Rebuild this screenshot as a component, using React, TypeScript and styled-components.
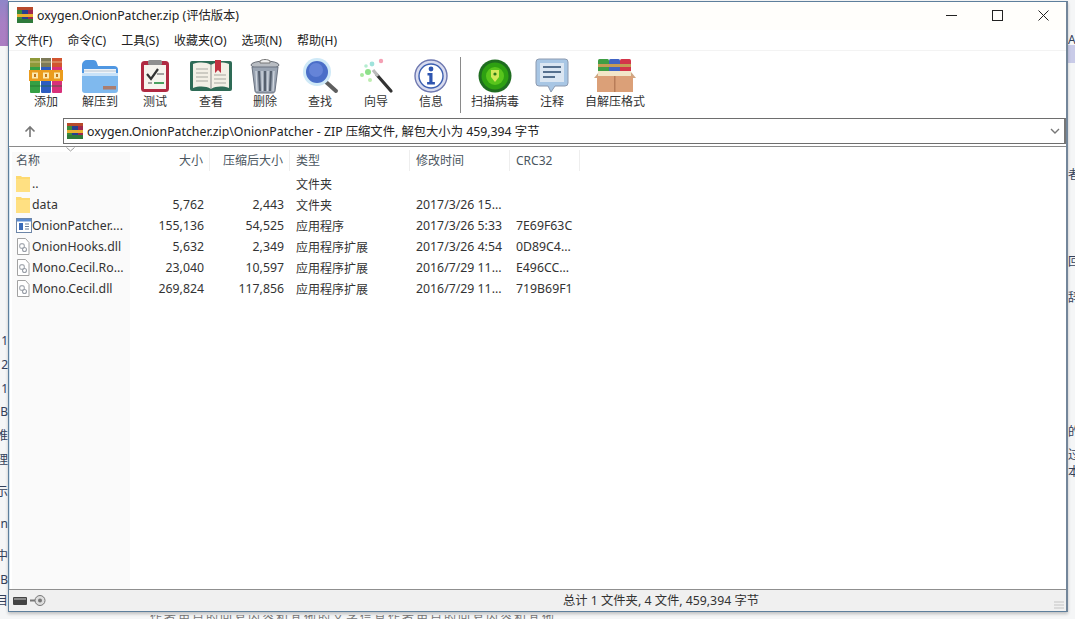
import React from 'react';
import styled, { createGlobalStyle } from 'styled-components';

const Global = createGlobalStyle`
  html, body { margin: 0; padding: 0; width: 1075px; height: 619px; overflow: hidden; background: #f4f5f6; }
  body { font-family: "Noto Sans", "Noto Sans CJK SC", sans-serif; }
`;
const FONT = `"Noto Sans", "Noto Sans CJK SC", sans-serif`;

const Desktop = styled.div`
  position: relative; width: 1075px; height: 619px; overflow: hidden;
  display: flex; flex-direction: column; padding: 1px 7px 7px 8px; box-sizing: border-box;
  background: #f5f6f7;
`;
const PurpleCorner = styled.div`
  position: absolute; left: 0; top: 0; width: 8px; height: 46px;
  background: linear-gradient(180deg, #8f86c8 0%, #a87fc4 50%, #ab7dc2 100%);
`;
const LavenderPatch = styled.div`
  position: absolute; right: 0; top: 45px; width: 7px; height: 18px; background: #c9cbe8;
`;
const Frag = styled.span<{ $left?: number; $right?: number; $top: number }>`
  position: absolute; top: ${p => p.$top}px;
  ${p => (p.$left !== undefined ? `left:${p.$left}px;` : `right:${p.$right}px;`)}
  font: 12px ${FONT}; color: #33405a; line-height: 14px; white-space: nowrap;
`;
const BottomFrag = styled.div`
  position: absolute; left: 150px; bottom: 0; width: 410px; height: 4px; overflow: hidden;
  font: 12px ${FONT}; color: #777; line-height: 5px; letter-spacing: 2px; white-space: nowrap;
`;
const Win = styled.div`
  position: relative; flex: 1; display: flex; flex-direction: column; background: #fff;
  border: 1px solid #5e7f9c; border-right: 2px solid #73869a;
  box-shadow: inset 1px 0 #d4e6f4, 0 2px 3px rgba(0,0,0,.22);
  font: 12px ${FONT}; color: #222; min-height: 0;
`;
const TitleBar = styled.div`
  height: 28px; box-sizing: border-box; padding: 0 0 2px 8px; display: flex; align-items: center;
  background: #fffefb; font-size: 12.3px; color: #222;
`;
const TitleText = styled.span` flex: 1; margin-left: 4px; `;
const WinBtn = styled.button`
  width: 46px; height: 26px; border: 0; background: none; padding: 0;
  display: flex; align-items: center; justify-content: center;
`;
const MenuBar = styled.div`
  height: 20px; display: flex; align-items: center; padding-left: 6px; gap: 15px; background: #fff; font-size: 12px; color: #222;
`;
const Toolbar = styled.div`
  height: 66px; display: flex; align-items: flex-start; padding: 6px 0 0 11px; background: #fff;
  border-top: 1px solid #f3f3f3; box-sizing: border-box;
`;
const Tool = styled.div<{ $w: number }>`
  width: ${p => p.$w}px; display: flex; flex-direction: column; align-items: center;
  font-size: 12px; line-height: 16px; color: #333; white-space: nowrap;
`;
const ToolIcon = styled.div`
  height: 37px; display: flex; align-items: center; justify-content: center;
`;
const ToolSep = styled.div` width: 1px; height: 56px; background: #8a8a8a; margin: 0 3px 0 0; `;
const AddressRow = styled.div`
  height: 30px; display: flex; align-items: center; background: #fff; box-sizing: border-box;
`;
const UpBtn = styled.div` width: 42px; margin-right: 12px; display: flex; justify-content: center; `;
const AddressBox = styled.div`
  flex: 1; height: 26px; box-sizing: border-box; border: 1px solid #6e6e6e; border-right: 2px solid #777;
  display: flex; align-items: center; padding-left: 3px; gap: 4px; font-size: 12.3px; color: #222;
`;
const AddressText = styled.span` flex: 1; white-space: nowrap; margin-top: -1px; `;
const Drop = styled.div` width: 18px; display: flex; justify-content: center; `;
const ListFrame = styled.div`
  flex: 1; position: relative; display: flex; flex-direction: column; min-height: 0;
  border-top: 1px solid #8a8a8a; box-shadow: inset 0 1px #fff; padding-top: 3px;
`;
const SortShade = styled.div`
  position: absolute; left: 3px; top: 5px; bottom: 0; width: 118px; background: #fafafa;
`;
const COLS = '127px 74px 80px 120px 100px 70px';
const HeadRow = styled.div`
  position: relative; height: 23px; display: grid; grid-template-columns: ${COLS}; font-size: 12px;
`;
const Row = styled.div`
  position: relative; height: 21px; display: grid; grid-template-columns: ${COLS}; align-items: center; font-size: 12.3px;
`;
const HCell = styled.div<{ $right?: boolean; $sep?: boolean; $first?: boolean }>`
  padding: 0 6px 0 ${p => (p.$first ? 7 : 6)}px; color: #4a5560; white-space: nowrap; text-align: ${p => (p.$right ? 'right' : 'left')};
  box-sizing: border-box; height: 21px; line-height: 21px;
  ${p => (p.$sep ? 'border-right: 1px solid #eeeeee;' : '')}
`;
const Cell = styled.div<{ $right?: boolean }>`
  padding: 0 6px; color: #333; overflow: hidden; white-space: nowrap; text-overflow: ellipsis; text-align: ${p => (p.$right ? 'right' : 'left')};
`;
const TypeCell = styled(Cell)` font-size: 12px; `;
const NameCell = styled.div`
  display: flex; align-items: center; padding-left: 7px; color: #333; white-space: nowrap; min-width: 0;
`;
const NameIcon = styled.span` width: 16px; flex: none; display: flex; `;
const NameText = styled.span` overflow: hidden; text-overflow: ellipsis; `;
const SortMark = styled.svg` position: absolute; left: 57px; top: -3px; `;
const Status = styled.div`
  height: 22px; display: grid; grid-template-columns: 554px 1fr; align-items: center; background: #f0f0f0;
  border-top: 1px solid #8f8f8f; box-sizing: border-box; font-size: 12.3px; color: #333; line-height: 18px;
`;
const StatusIcons = styled.div` display: flex; align-items: center; padding-left: 4px; gap: 2px; `;
const Grip = styled.svg` position: absolute; right: 0; bottom: 0; `;

const RarBooks = () => (
  <svg width="34" height="35" viewBox="0 0 34 35">
    <rect x="1" y="0" width="10" height="35" rx="1" fill="#35a044" />
    <rect x="12" y="0" width="10" height="35" rx="1" fill="#2d5cc0" />
    <rect x="23" y="0" width="10" height="35" rx="1" fill="#d8307a" />
    <rect x="1" y="0" width="10" height="9" fill="#8f9a3a" />
    <rect x="12" y="0" width="10" height="9" fill="#7d7a58" />
    <rect x="23" y="0" width="10" height="9" fill="#d2552f" />
    <path d="M1 4h32" stroke="#e9d9a4" strokeWidth="1" opacity=".7" />
    <rect x="0" y="12" width="34" height="11" fill="#eb9c1d" />
    <path d="M3 14.5h6v6H3zM14 14.5h6v6h-6zM25 14.5h6v6h-6z" fill="#fbe8b0" />
    <path d="M5 16h2v3H5zM16 16h2v3h-2zM27 16h2v3h-2z" fill="#c4761a" />
    <path d="M1 28h32" stroke="#1f6a2a" strokeWidth="1.5" opacity=".45" />
  </svg>
);
const SmallRar = () => (
  <svg width="16" height="16" viewBox="0 0 16 16">
    <rect x="0" y="0" width="5" height="16" fill="#3a8a3a" />
    <rect x="5" y="0" width="6" height="16" fill="#27408f" />
    <rect x="11" y="0" width="5" height="16" fill="#a0284c" />
    <rect x="0" y="0" width="16" height="3" fill="#b84a2a" />
    <rect x="0" y="7" width="16" height="3" fill="#e8b030" />
    <rect x="0" y="12" width="16" height="4" fill="#2f7a3a" />
  </svg>
);
const ExtractIcon = () => (
  <svg width="38" height="34" viewBox="0 0 38 34">
    <path d="M1 6a5 5 0 0 1 5-5h6a4 4 0 0 1 4 3l1 3h16a4 4 0 0 1 4 4v8H1z" fill="#4f97e2" />
    <rect x="3" y="10" width="32" height="7" fill="#eef3f8" />
    <path d="M3 12h32" stroke="#b8c4d0" />
    <rect x="1" y="14" width="36" height="20" rx="3" fill="#7fb9ee" />
    <rect x="1" y="14" width="36" height="3" fill="#c9e2f8" />
    <rect x="22" y="27" width="13" height="3.5" fill="#ab7d6e" />
  </svg>
);
const TestIcon = () => (
  <svg width="30" height="34" viewBox="0 0 30 34">
    <rect x="1" y="2" width="28" height="31" rx="3.5" fill="#b02a42" />
    <rect x="4" y="6" width="22" height="24" fill="#f6f4ee" />
    <rect x="8" y="1" width="14" height="5" rx="1.5" fill="#8f8f8f" />
    <path d="M7 15l4 5 7-10" fill="none" stroke="#333" strokeWidth="2.2" />
    <path d="M17 15h7M8 24h4" stroke="#888" strokeWidth="1.6" />
    <path d="M14 24h10" stroke="#4aa060" strokeWidth="2" />
  </svg>
);
const BookIcon = () => (
  <svg width="42" height="32" viewBox="0 0 42 32">
    <rect x="0" y="1" width="42" height="30" rx="2" fill="#2e6b56" />
    <path d="M3 4c6-2 13-2 18 1 5-3 12-3 18-1v24c-6-2-13-2-18 1-5-3-12-3-18-1z" fill="#f3f0e6" />
    <path d="M6 9h12M6 13h12M6 17h12M6 21h12M24 15h12M24 19h12M24 23h12" stroke="#a8a8a0" strokeWidth="1.2" />
    <path d="M25 0h6v13l-3-3-3 3z" fill="#c03040" />
    <rect x="20.5" y="4" width="1" height="25" fill="#888" />
  </svg>
);
const TrashIcon = () => (
  <svg width="32" height="36" viewBox="0 0 32 36">
    <ellipse cx="16" cy="7" rx="14" ry="4" fill="#b8bcc2" stroke="#6a6f78" />
    <path d="M11 3c2-2 8-2 10 0v2H11z" fill="#eee" stroke="#777" />
    <path d="M3 9h26l-3 24c-.3 1.5-1 2-3 2H9c-2 0-2.7-.5-3-2z" fill="#9aa4b2" stroke="#6a7280" />
    <path d="M10 13l1 20M16 13v20M22 13l-1 20" stroke="#56606e" strokeWidth="2" />
    <path d="M7 13l1 20M13 13l.4 20M19 13l-.4 20M25 13l-1 20" stroke="#d4dae2" strokeWidth="1.2" />
  </svg>
);
const FindIcon = () => (
  <svg width="37" height="36" viewBox="0 0 37 36">
    <path d="M24 24l10 9" stroke="#5e5e5e" strokeWidth="4" strokeLinecap="round" />
    <circle cx="15" cy="14" r="14" fill="#cfe9f7" />
    <circle cx="15" cy="14" r="11" fill="#4a6ec8" />
    <circle cx="14" cy="12" r="7" fill="#6584d8" />
  </svg>
);
const WandIcon = () => (
  <svg width="36" height="36" viewBox="0 0 36 36">
    <path d="M19 17l14 16" stroke="#333" strokeWidth="3.2" strokeLinecap="round" />
    <path d="M15 12l5 6" stroke="#bbb" strokeWidth="3.2" />
    <circle cx="10" cy="14" r="3" fill="#8ee08a" />
    <circle cx="4" cy="17" r="2" fill="#a8e8a0" />
    <circle cx="14" cy="6" r="2.4" fill="#9fe3dc" />
    <circle cx="8" cy="8" r="1.8" fill="#b4ecd0" />
    <circle cx="23" cy="3" r="2.2" fill="#f4a0b4" />
    <circle cx="12" cy="22" r="2" fill="#bdecb0" />
  </svg>
);
const InfoIcon = () => (
  <svg width="34" height="34" viewBox="0 0 34 34">
    <circle cx="17" cy="17" r="16" fill="#d9dcef" stroke="#6e78b0" strokeWidth="1.4" />
    <circle cx="17" cy="17" r="12" fill="#fff" stroke="#3c5fb0" strokeWidth="1.4" />
    <circle cx="17" cy="10" r="2.4" fill="#2e55b0" />
    <path d="M13.5 14h5v9h2.4v2.4h-7.8V23h2.2v-6.6h-1.8z" fill="#2e55b0" />
  </svg>
);
const ScanIcon = () => (
  <svg width="34" height="34" viewBox="0 0 34 34">
    <circle cx="17" cy="17" r="16.5" fill="#1f6d20" />
    <circle cx="17" cy="17" r="13.5" fill="#2ea012" />
    <circle cx="17" cy="17" r="9" fill="#58c51c" />
    <path d="M13 11h8v7l-4 5-4-5z" fill="#d2e85a" />
    <circle cx="17" cy="15" r="1.6" fill="#2c7a1a" />
  </svg>
);
const CommentIcon = () => (
  <svg width="34" height="36" viewBox="0 0 34 36">
    <path d="M4 1h26a3 3 0 0 1 3 3v21a3 3 0 0 1-3 3H20l-4 6-3-6H4a3 3 0 0 1-3-3V4a3 3 0 0 1 3-3z" fill="#a8c6e4" stroke="#8c9ab0" />
    <rect x="5" y="5" width="24" height="19" fill="#dbe6f2" />
    <path d="M8 9h18M8 14h18M8 19h12" stroke="#56708e" strokeWidth="2.2" />
  </svg>
);
const SfxIcon = () => (
  <svg width="42" height="34" viewBox="0 0 42 34">
    <rect x="4" y="0" width="11" height="14" rx="1.5" fill="#3f9e45" />
    <rect x="15" y="0" width="11" height="14" rx="1.5" fill="#4164c4" />
    <rect x="26" y="0" width="11" height="14" rx="1.5" fill="#d3354a" />
    <rect x="4" y="5" width="33" height="3" fill="#c69c54" />
    <path d="M0 19l5-6h32l5 6z" fill="#cfa784" />
    <rect x="4" y="12" width="33" height="5" fill="#f2e6c8" />
    <rect x="3" y="17" width="36" height="16" fill="#dba078" />
    <rect x="20" y="17" width="1.5" height="16" fill="#b87c58" />
  </svg>
);
const FolderIcon = () => (
  <svg width="14" height="17" viewBox="0 0 14 17">
    <path d="M0 1h5l1 1h8v15H0z" fill="#fdd96f" />
    <rect x="0" y="4" width="14" height="13" fill="#ffe082" />
  </svg>
);
const ExeIcon = () => (
  <svg width="16" height="15" viewBox="0 0 16 15">
    <rect x=".5" y=".5" width="15" height="14" fill="#fff" stroke="#6d86a8" />
    <rect x="1" y="1" width="14" height="2.5" fill="#5a8ad0" />
    <rect x="3" y="5" width="4" height="7" fill="#3a6ab8" />
    <path d="M9 6h4M9 8.5h4M9 11h4" stroke="#6a7d98" />
  </svg>
);
const DllIcon = () => (
  <svg width="14" height="17" viewBox="0 0 14 17">
    <path d="M1.5.5h8l3.5 4v12H1.5z" fill="#fff" stroke="#a2a2a2" />
    <circle cx="6" cy="8" r="2.4" fill="none" stroke="#a6abb2" strokeWidth="1.1" />
    <circle cx="8.5" cy="11.5" r="2" fill="none" stroke="#9a9fa8" strokeWidth="1.1" />
  </svg>
);

const tools: [React.ReactNode, string, number][] = [
  [<RarBooks />, '添加', 52],
  [<ExtractIcon />, '解压到', 56],
  [<TestIcon />, '测试', 54],
  [<BookIcon />, '查看', 58],
  [<TrashIcon />, '删除', 50],
  [<FindIcon />, '查找', 60],
  [<WandIcon />, '向导', 52],
  [<InfoIcon />, '信息', 58],
];
const tools2: [React.ReactNode, string, number][] = [
  [<ScanIcon />, '扫描病毒', 62],
  [<CommentIcon />, '注释', 52],
  [<SfxIcon />, '自解压格式', 74],
];
const menus = ['文件(F)', '命令(C)', '工具(S)', '收藏夹(O)', '选项(N)', '帮助(H)'];
type Kind = 'folder' | 'exe' | 'dll';
const rows: { k: Kind; n: string; s: string; c: string; t: string; d: string; r: string }[] = [
  { k: 'folder', n: '..', s: '', c: '', t: '文件夹', d: '', r: '' },
  { k: 'folder', n: 'data', s: '5,762', c: '2,443', t: '文件夹', d: '2017/3/26 15...', r: '' },
  { k: 'exe', n: 'OnionPatcher....', s: '155,136', c: '54,525', t: '应用程序', d: '2017/3/26 5:33', r: '7E69F63C' },
  { k: 'dll', n: 'OnionHooks.dll', s: '5,632', c: '2,349', t: '应用程序扩展', d: '2017/3/26 4:54', r: '0D89C4...' },
  { k: 'dll', n: 'Mono.Cecil.Ro...', s: '23,040', c: '10,597', t: '应用程序扩展', d: '2016/7/29 11...', r: 'E496CC...' },
  { k: 'dll', n: 'Mono.Cecil.dll', s: '269,824', c: '117,856', t: '应用程序扩展', d: '2016/7/29 11...', r: '719B69F1' },
];
const kindIcon = { folder: <FolderIcon />, exe: <ExeIcon />, dll: <DllIcon /> };
const leftFrags: [number, string][] = [[334, '1'], [358, '2'], [382, '1'], [405, 'B'], [429, '推'], [453, '理'], [485, '示'], [517, 'n'], [549, '中'], [573, 'B'], [594, '目']];
const rightFrags: [number, string][] = [[33, 'A'], [168, '者'], [255, '回'], [291, '辞'], [425, '的'], [448, '过'], [465, '本']];

export default function App() {
  return (
    <Desktop>
      <Global />
      <PurpleCorner />
      <LavenderPatch />
      {leftFrags.map(([t, g]) => <Frag key={t} $right={1067} $top={t}>{g}</Frag>)}
      {rightFrags.map(([t, g]) => <Frag key={t} $left={1068} $top={t}>{g}</Frag>)}
      <BottomFrag>作者用户的回复内容和其他的文字信息作者用户的回复内容和其他</BottomFrag>
      <Win>
        <TitleBar>
          <SmallRar />
          <TitleText>oxygen.OnionPatcher.zip (评估版本)</TitleText>
          <WinBtn><svg width="11" height="11"><path d="M0 5.5h11" stroke="#222" /></svg></WinBtn>
          <WinBtn><svg width="11" height="11"><rect x=".5" y=".5" width="10" height="10" fill="none" stroke="#222" /></svg></WinBtn>
          <WinBtn><svg width="11" height="11"><path d="M.5.5l10 10M10.5.5l-10 10" stroke="#222" /></svg></WinBtn>
        </TitleBar>
        <MenuBar>{menus.map(m => <span key={m}>{m}</span>)}</MenuBar>
        <Toolbar>
          {tools.map(([i, l, w]) => <Tool key={l} $w={w}><ToolIcon>{i}</ToolIcon><span>{l}</span></Tool>)}
          <ToolSep />
          {tools2.map(([i, l, w]) => <Tool key={l} $w={w}><ToolIcon>{i}</ToolIcon><span>{l}</span></Tool>)}
        </Toolbar>
        <AddressRow>
          <UpBtn>
            <svg width="12" height="13" viewBox="0 0 12 13"><path d="M6 12V2M1.5 6.5L6 2l4.5 4.5" fill="none" stroke="#777" strokeWidth="1.6" /></svg>
          </UpBtn>
          <AddressBox>
            <SmallRar />
            <AddressText>oxygen.OnionPatcher.zip\OnionPatcher - ZIP 压缩文件, 解包大小为 459,394 字节</AddressText>
            <Drop><svg width="10" height="6" viewBox="0 0 10 6"><path d="M1 1l4 4 4-4" fill="none" stroke="#777" strokeWidth="1.4" /></svg></Drop>
          </AddressBox>
        </AddressRow>
        <ListFrame>
          <SortShade />
          <HeadRow>
            <HCell $first>名称</HCell>
            <HCell $right $sep>大小</HCell>
            <HCell $right $sep>压缩后大小</HCell>
            <HCell $sep>类型</HCell>
            <HCell $sep>修改时间</HCell>
            <HCell $sep>CRC32</HCell>
            <SortMark width="9" height="5" viewBox="0 0 9 5"><path d="M.5.5l4 3.5 4-3.5" fill="none" stroke="#999" /></SortMark>
          </HeadRow>
          {rows.map((r, i) => (
            <Row key={i}>
              <NameCell><NameIcon>{kindIcon[r.k]}</NameIcon><NameText>{r.n}</NameText></NameCell>
              <Cell $right>{r.s}</Cell>
              <Cell $right>{r.c}</Cell>
              <TypeCell>{r.t}</TypeCell>
              <Cell>{r.d}</Cell>
              <Cell>{r.r}</Cell>
            </Row>
          ))}
        </ListFrame>
        <Status>
          <StatusIcons>
            <svg width="14" height="8" viewBox="0 0 14 8"><rect width="14" height="8" rx="1" fill="#444" /><rect x="1" y="1" width="12" height="2" fill="#888" /></svg>
            <svg width="18" height="11" viewBox="0 0 18 11"><path d="M1 5.5h6" stroke="#777" strokeWidth="2" /><circle cx="11" cy="5.5" r="5" fill="#ddd" stroke="#777" /><circle cx="11" cy="5.5" r="2" fill="#777" /></svg>
          </StatusIcons>
          <span>总计 1 文件夹, 4 文件, 459,394 字节</span>
          <Grip width="12" height="12" viewBox="0 0 12 12"><path d="M0 3h10M0 6h10M0 9h10" stroke="#c4c4c4" /></Grip>
        </Status>
      </Win>
    </Desktop>
  );
}
